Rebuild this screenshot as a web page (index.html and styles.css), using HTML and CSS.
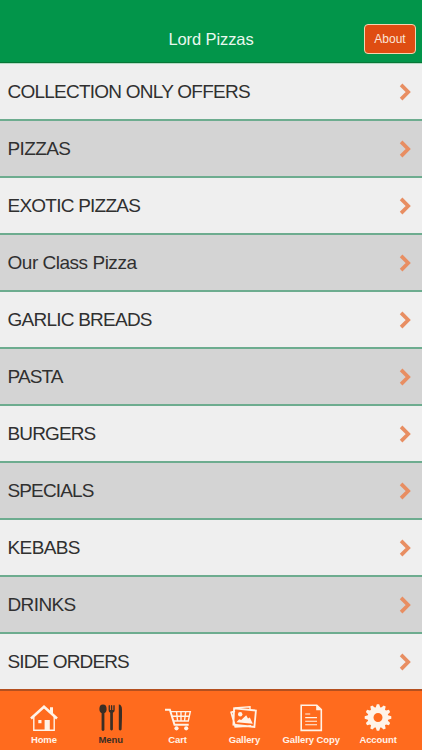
FILE: index.html
```html
<!DOCTYPE html>
<html lang="en">
<head>
<meta charset="utf-8">
<title>Lord Pizzas</title>
<link rel="stylesheet" href="styles.css">
</head>
<body>
<svg class="sprite" aria-hidden="true"><symbol id="chevron" viewBox="0 0 12 18"><path d="M2.1 1.9 9.2 9l-7.1 7.1" fill="none" stroke="currentColor" stroke-width="3.7"/></symbol></svg>
<header class="header">
  <h1 class="title">Lord Pizzas</h1>
  <button class="about">About</button>
</header>
<main class="list">
  <a class="row"><span>COLLECTION ONLY OFFERS</span><svg class="chevron"><use href="#chevron"/></svg></a>
  <a class="row"><span class="loose">PIZZAS</span><svg class="chevron"><use href="#chevron"/></svg></a>
  <a class="row"><span>EXOTIC PIZZAS</span><svg class="chevron"><use href="#chevron"/></svg></a>
  <a class="row"><span class="mixed">Our Class Pizza</span><svg class="chevron"><use href="#chevron"/></svg></a>
  <a class="row"><span>GARLIC BREADS</span><svg class="chevron"><use href="#chevron"/></svg></a>
  <a class="row"><span class="wide">PASTA</span><svg class="chevron"><use href="#chevron"/></svg></a>
  <a class="row"><span class="wide">BURGERS</span><svg class="chevron"><use href="#chevron"/></svg></a>
  <a class="row"><span class="wide">SPECIALS</span><svg class="chevron"><use href="#chevron"/></svg></a>
  <a class="row"><span class="loose">KEBABS</span><svg class="chevron"><use href="#chevron"/></svg></a>
  <a class="row"><span class="loose">DRINKS</span><svg class="chevron"><use href="#chevron"/></svg></a>
  <a class="row"><span class="wide">SIDE ORDERS</span><svg class="chevron"><use href="#chevron"/></svg></a>
</main>
<nav class="tabs">
  <a class="tab"><svg class="icon" viewBox="0 0 30 30"><path d="M4.8 15v13.2h20.4V15" fill="none" stroke="currentColor" stroke-width="1.4"/><path d="M2 16.5 15 4.8l13 11.7" fill="none" stroke="currentColor" stroke-width="2.6"/><path d="M21 5.2h3v7l-3-2.7zM15.6 18h5.2v10.2h-5.2zM9.3 18h3.2v3.2H9.3z" fill="currentColor"/></svg>Home</a>
  <a class="tab active"><svg class="icon" viewBox="0 0 30 30"><g fill="currentColor"><ellipse cx="7" cy="6.9" rx="3.6" ry="4.4"/><rect x="5.6" y="9" width="2.8" height="20" rx="1.4"/><path d="M12.6 3.4q.8-1 1.3 0V8h1V3.4q.8-1 1.4 0V8h1V3.4q.8-1 1.4 0V8q0 2-1.8 2.8v16.8q-1.3 2-2.7 0V10.8q-1.6-.8-1.6-2.8zM22.8 2.4q3.2 0 3.2 5.5v7l-.4 12.7q-1.3 2-2.8 0z"/></g></svg>Menu</a>
  <a class="tab"><svg class="icon" viewBox="0 0 30 30"><path d="M2 7.7h4.9l4.6 15.1h14.2" fill="none" stroke="currentColor" stroke-width="2"/><path d="M7.7 9.6h19.6l-2 9.4H10.5M9 14.2h17.2M13.5 9.6l1.1 9.4M18 9.6V19M22.7 9.6 21.5 19" fill="none" stroke="currentColor" stroke-width="1.4"/><g fill="currentColor"><circle cx="13.5" cy="26.3" r="2.1"/><circle cx="23.2" cy="26.3" r="2.1"/></g></svg>Cart</a>
  <a class="tab"><svg class="icon" viewBox="0 0 30 30"><path d="M6 9.2 2.2 10.4l4.1 14.4 15.9-1M5.1 6.3l21.8 2.2-1.5 16.4-21-2.2z" fill="none" stroke="currentColor" stroke-width="1.8"/><path d="M5.2 7.8 6 5.8l15-1v2.4" fill="none" stroke="currentColor" stroke-width="1.4"/><circle cx="11.2" cy="12.2" r="2.2" fill="currentColor"/><path d="m7.4 20.3 2.8-3 2 .7 5-4.8 1.8 3.2 1.8-1 3 6.4z" fill="currentColor"/></svg>Gallery</a>
  <a class="tab"><svg class="icon" viewBox="0 0 30 30"><path d="M5.2 3.2h15.6l4.5 4.5v20.7H5.2z" fill="none" stroke="currentColor" stroke-width="1.6"/><path d="M20.2 3v5.3h5.2z" fill="currentColor"/><path d="M9.2 12h5M9.2 15.6H21M9.2 19.2H21M9.2 22.8H21" fill="none" stroke="currentColor" stroke-width="1.1"/></svg>Gallery Copy</a>
  <a class="tab"><svg class="icon" viewBox="0 0 30 30"><circle cx="15" cy="15.5" r="7.5" fill="none" stroke="currentColor" stroke-width="6"/><g fill="currentColor"><path id="pair" d="m12.3 7 1.5-4.8h2.4L17.7 7zM12.3 24l1.5 4.8h2.4l1.5-4.8z"/><use href="#pair" transform="rotate(30 15 15.5)"/><use href="#pair" transform="rotate(60 15 15.5)"/><use href="#pair" transform="rotate(90 15 15.5)"/><use href="#pair" transform="rotate(120 15 15.5)"/><use href="#pair" transform="rotate(150 15 15.5)"/></g></svg>Account</a>
</nav>
</body>
</html>
```
FILE: styles.css
```css
* { box-sizing: border-box; }
body {
  margin: 0;
  height: 750px;
  overflow: hidden;
  display: flex;
  flex-direction: column;
  font-family: "Liberation Sans", Arial, sans-serif;
  background: #efefef;
}
.sprite { display: none; }
.header {
  height: 64px;
  flex: none;
  display: grid;
  grid-template-columns: 1fr auto 1fr;
  align-items: start;
  padding: 24px 6px 0;
  background: #02954a;
  border-bottom: 1px solid #b4dcc5;
  box-shadow: inset 0 -1px #087637;
}
.title {
  grid-column: 2;
  margin: 0;
  font-size: 16.5px;
  font-weight: 400;
  line-height: 30px;
  letter-spacing: -.1px;
  color: #e9f8ef;
}
.about {
  justify-self: end;
  width: 52px;
  height: 30px;
  padding: 0;
  border: 1.5px solid #f4d5b0;
  border-radius: 4px;
  background: #df4d12;
  color: #fbe5d8;
  font: 12px "Liberation Sans", Arial, sans-serif;
}
.list { height: 625px; flex: none; overflow: hidden; }
.row {
  height: 57px;
  display: flex;
  align-items: center;
  justify-content: space-between;
  padding: 0 11px 0 7.5px;
  border-bottom: 2px solid #6dac8f;
  background: #efefef;
  color: #303030;
  font-size: 19px;
  letter-spacing: -.76px;
}
.row:nth-child(even) { background: #d4d4d4; }
.loose { letter-spacing: -.6px; }
.wide { letter-spacing: -.87px; }
.mixed { letter-spacing: -.48px; }
.chevron { width: 12px; height: 18px; color: #e88e62; }
.tabs {
  height: 61px;
  flex: none;
  display: flex;
  padding: 11px 10.5px 0;
  border-top: 2px solid #b4501f;
  background: #ff6b1e;
}
.tab {
  flex: 1 1 0;
  min-width: 0;
  display: flex;
  flex-direction: column;
  align-items: center;
  color: #fff3e8;
  font-size: 9.5px;
  font-weight: 700;
  line-height: 11px;
  letter-spacing: -.1px;
  white-space: nowrap;
}
.active { color: #3a2e25; }
.icon { width: 30px; height: 30px; margin-bottom: 2px; }
```
